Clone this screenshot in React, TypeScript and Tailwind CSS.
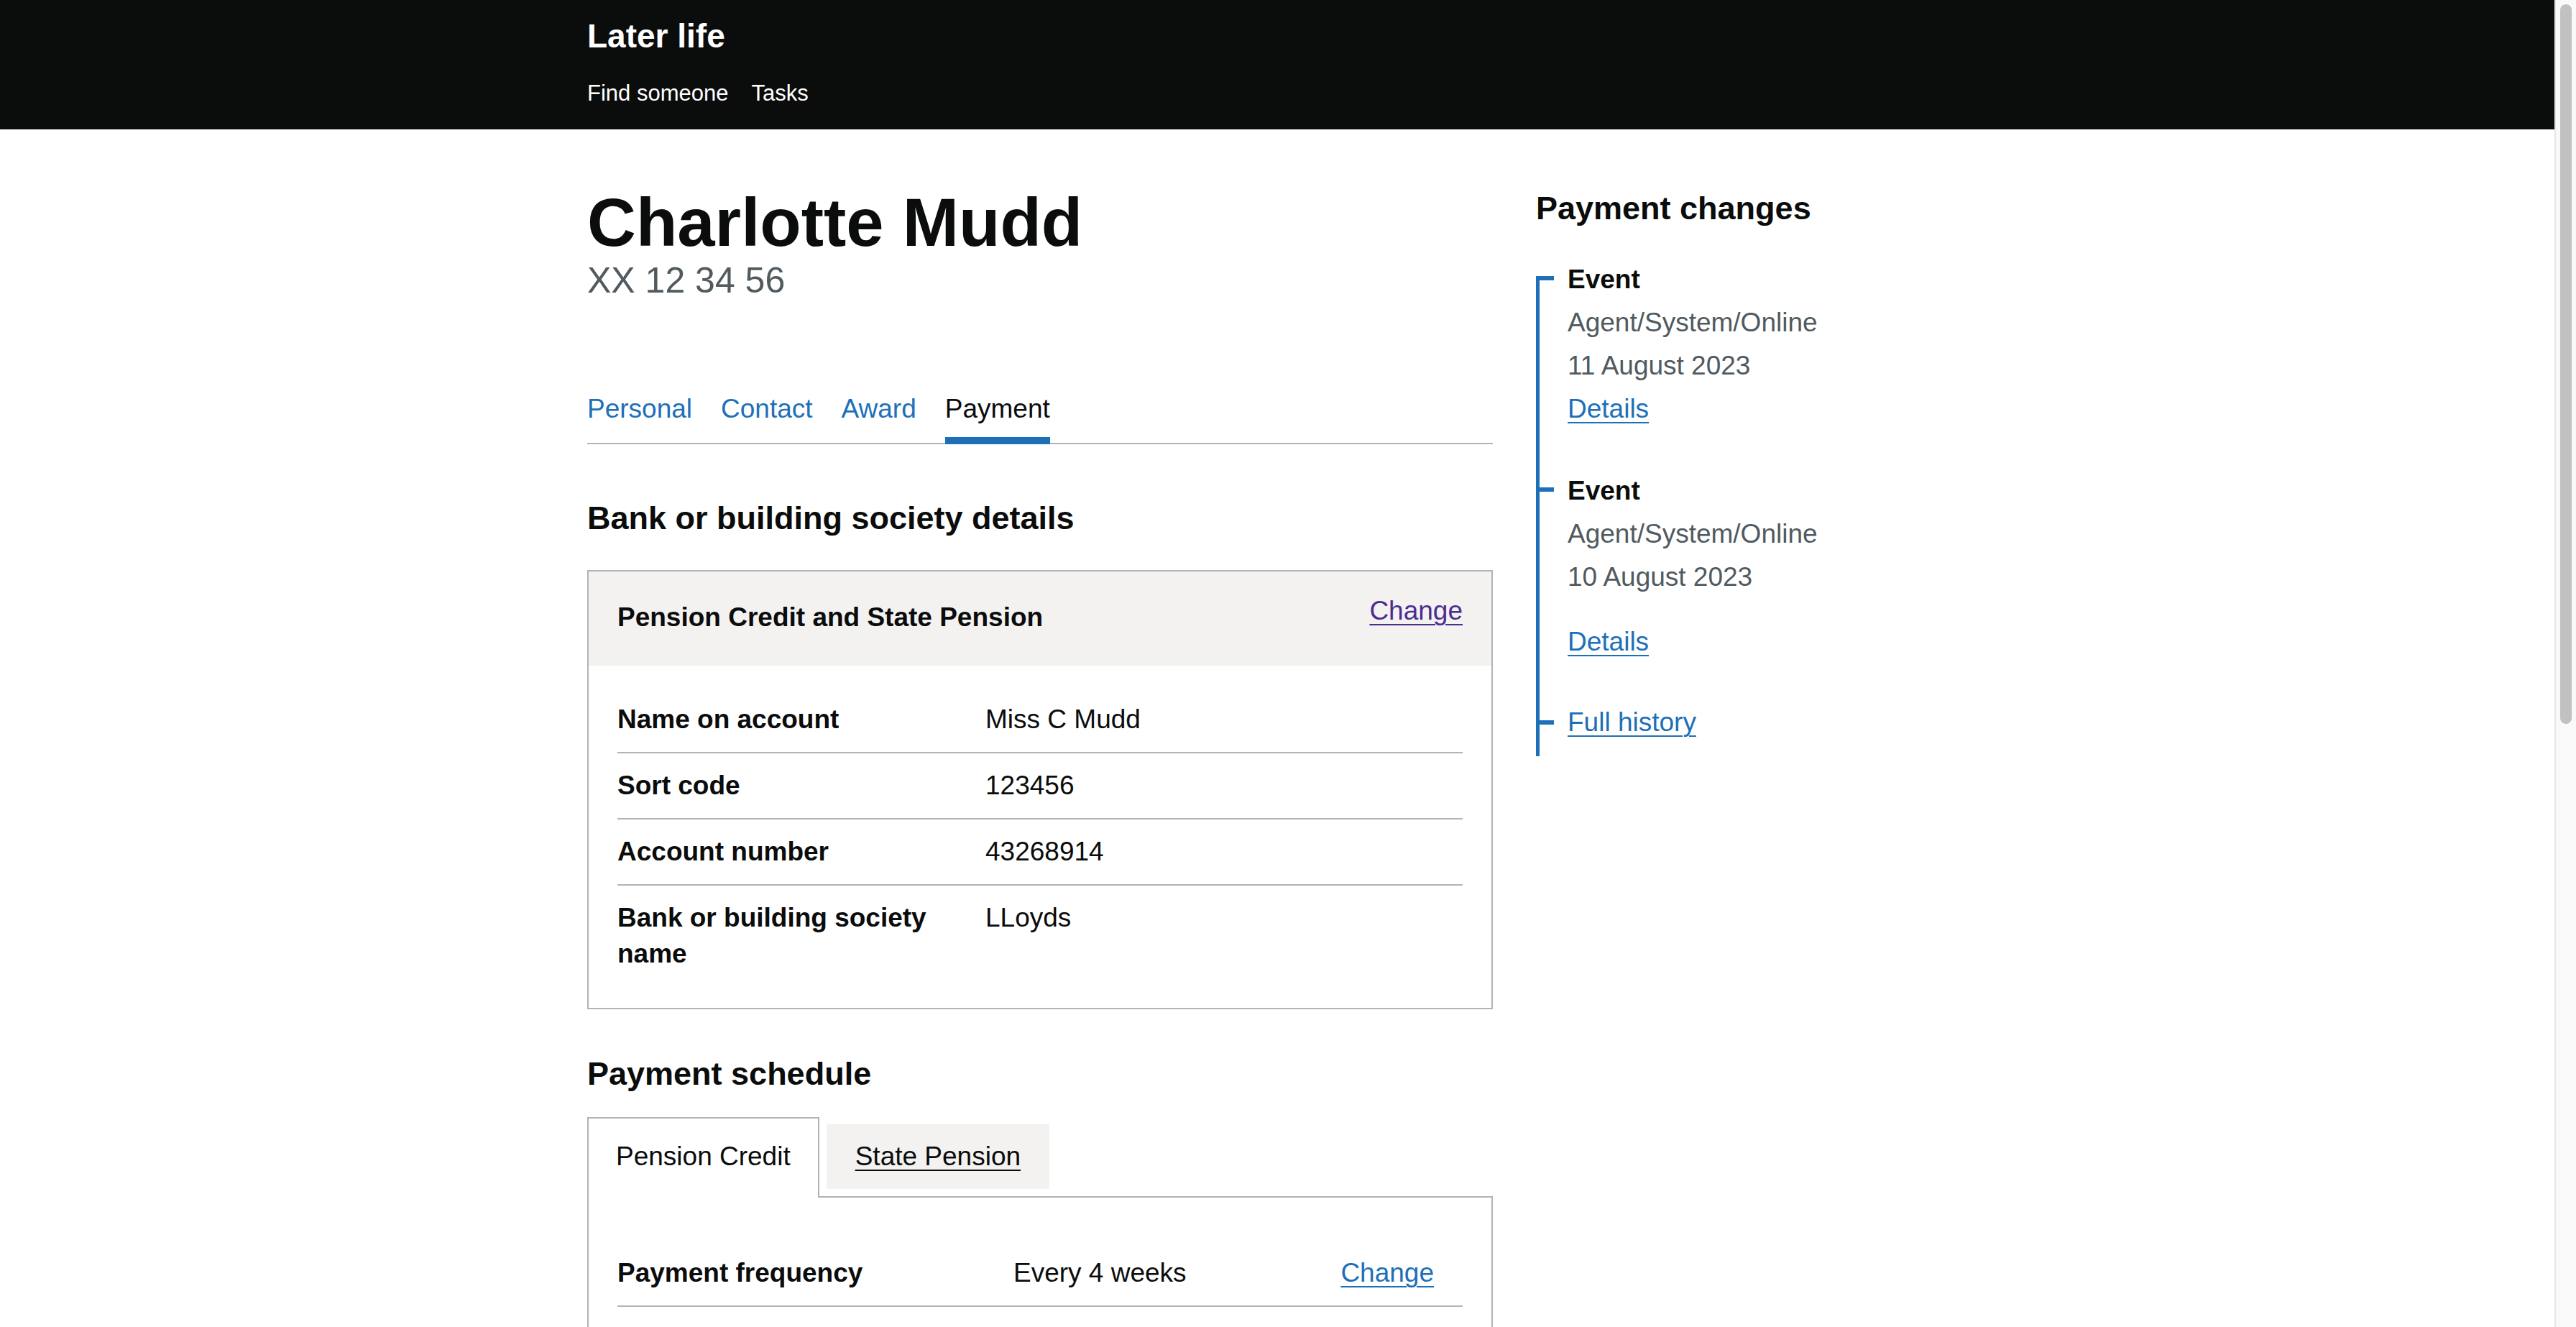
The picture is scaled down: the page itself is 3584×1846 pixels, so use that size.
const bankRows = [
  { key: 'Name on account', value: 'Miss C Mudd' },
  { key: 'Sort code', value: '123456' },
  { key: 'Account number', value: '43268914' },
  { key: 'Bank or building society name', value: 'LLoyds' },
]

const scheduleRows = [
  { key: 'Payment frequency', value: 'Every 4 weeks' },
  { key: 'Payment day', value: 'Monday' },
  { key: 'Next payment date', value: '4 September 2023' },
  { key: 'Amount', value: '£201.05' },
]

const recentPayments = [
  { key: '7 August 2023', value: '£201.05' },
  { key: '10 July 2023', value: '£201.05' },
  { key: '12 June 2023', value: '£201.05' },
  { key: '15 May 2023', value: '£198.40' },
]

const tabs = ['Personal', 'Contact', 'Award', 'Payment']

const linkCls = 'underline decoration-2 underline-offset-[6px]'

// Payment changes timeline item
const TimelineItem = ({ date, spaced }: { date: string; spaced?: boolean }) => (
  <div className="relative">
    <span className="absolute left-[-44px] top-[25px] h-[6px] w-[25px] bg-[#1d70b8]" />
    <div className="font-bold">Event</div>
    <div className="text-[#505a5f]">Agent/System/Online</div>
    <div className="text-[#505a5f]">{date}</div>
    <div className={spaced ? 'mt-[30px]' : ''}>
      <a href="#" className={`text-[#1d70b8] ${linkCls}`}>
        Details
      </a>
    </div>
  </div>
)

export default function App() {
  return (
    <div className="min-h-screen bg-white pr-[30px] font-['Liberation_Sans',Arial,sans-serif] text-[#0b0c0c]">
      {/* Header */}
      <header className="bg-[#0b0c0c] text-white">
        <div className="mx-auto max-w-[1920px] pt-[20px] pb-[25px]">
          <div className="text-[46px] font-bold leading-[60px]">Later life</div>
          <nav className="mt-[25px] flex gap-[32px] text-[31px] leading-[50px]">
            <a href="#">Find someone</a>
            <a href="#">Tasks</a>
          </nav>
        </div>
      </header>

      <main className="mx-auto flex max-w-[1920px] gap-[60px] pt-[80px] pb-[120px]">
        {/* Left column */}
        <div className="w-[1260px] shrink-0">
          <h1 className="text-[94px] font-bold leading-[100px]">Charlotte Mudd</h1>
          <div className="text-[50px] leading-[60px] text-[#505a5f]">XX 12 34 56</div>

          <ul className="mt-[124px] flex gap-[40px] border-b-2 border-[#b1b4b6] text-[37px] leading-[50px]">
            {tabs.map((t) => (
              <li
                key={t}
                className={
                  t === 'Payment'
                    ? '-mb-[2px] border-b-[10px] border-[#1d70b8] pb-[14px] text-[#0b0c0c]'
                    : '-mb-[2px] border-b-[10px] border-transparent pb-[14px] text-[#1d70b8]'
                }
              >
                <a href="#">{t}</a>
              </li>
            ))}
          </ul>

          <h2 className="mt-[73px] mb-[42px] text-[45px] font-bold leading-[60px]">
            Bank or building society details
          </h2>

          {/* Summary card */}
          <div className="border-2 border-[#b1b4b6] text-[37px] leading-[50px]">
            <div className="flex items-start justify-between bg-[#f3f2f1] px-[40px] pt-[30px] pb-[42px]">
              <div className="mt-[9px] font-bold">Pension Credit and State Pension</div>
              <a href="#" className={`text-[#4c2c92] ${linkCls}`}>
                Change
              </a>
            </div>
            <dl className="px-[40px] py-[30px]">
              {bankRows.map((r, i) => (
                <div
                  key={r.key}
                  className={`grid grid-cols-[512px_1fr] py-[20px] ${
                    i < bankRows.length - 1 ? 'border-b-2 border-[#b1b4b6]' : ''
                  }`}
                >
                  <dt className="pr-[40px] font-bold">{r.key}</dt>
                  <dd>{r.value}</dd>
                </div>
              ))}
            </dl>
          </div>

          <h2 className="mt-[60px] text-[45px] font-bold leading-[60px]">Payment schedule</h2>

          {/* Schedule tabs */}
          <div className="mt-[30px] text-[37px] leading-[50px]">
            <ul className="flex items-start gap-[10px]">
              <li className="relative z-10 -mb-[2px] border-2 border-b-0 border-[#b1b4b6] bg-white px-[38px] pt-[28px] pb-[32px]">
                Pension Credit
              </li>
              <li className="mt-[10px] bg-[#f3f2f1] px-[40px] py-[20px]">
                <a href="#" className={linkCls}>
                  State Pension
                </a>
              </li>
            </ul>
            <div className="border-2 border-[#b1b4b6] px-[40px] py-[60px]">
              <dl>
                {scheduleRows.map((r, i) => (
                  <div
                    key={r.key}
                    className={`grid grid-cols-[551px_1fr_auto] py-[20px] ${
                      i < scheduleRows.length - 1 ? 'border-b-2 border-[#b1b4b6]' : ''
                    }`}
                  >
                    <dt className="pr-[40px] font-bold">{r.key}</dt>
                    <dd>{r.value}</dd>
                    <dd className="pr-[40px]">
                      <a href="#" className={`text-[#1d70b8] ${linkCls}`}>
                        Change
                      </a>
                    </dd>
                  </div>
                ))}
              </dl>
            </div>
          </div>

          <h2 className="mt-[60px] mb-[40px] text-[45px] font-bold leading-[60px]">Recent payments</h2>
          <dl className="text-[37px] leading-[50px]">
            {recentPayments.map((r) => (
              <div key={r.key} className="grid grid-cols-[551px_1fr] border-b-2 border-[#b1b4b6] py-[20px]">
                <dt className="pr-[40px] font-bold">{r.key}</dt>
                <dd>{r.value}</dd>
              </div>
            ))}
          </dl>
        </div>

        {/* Right column */}
        <div className="w-[600px] shrink-0">
          <h2 className="text-[45px] font-bold leading-[60px]">Payment changes</h2>
          <div className="relative mt-[39px] pl-[44px] text-[37px] leading-[60px]">
            <span className="absolute left-0 top-[25px] bottom-[-17px] w-[5px] bg-[#1d70b8]" />
            <TimelineItem date="11 August 2023" />
            <div className="mt-[54px]">
              <TimelineItem date="10 August 2023" spaced />
            </div>
            <div className="relative mt-[52px]">
              <span className="absolute left-[-44px] top-[27px] h-[6px] w-[25px] bg-[#1d70b8]" />
              <a href="#" className={`text-[#1d70b8] ${linkCls}`}>
                Full history
              </a>
            </div>
          </div>
        </div>
      </main>

      <footer className="border-t-2 border-[#b1b4b6] bg-[#f3f2f1]">
        <div className="mx-auto flex max-w-[1920px] gap-[40px] py-[100px] text-[31px] leading-[50px]">
          <a href="#" className="underline">Help</a>
          <a href="#" className="underline">Privacy</a>
          <a href="#" className="underline">Cookies</a>
          <a href="#" className="underline">Accessibility statement</a>
        </div>
      </footer>

      {/* Browser scrollbar */}
      <div className="fixed top-0 right-0 z-20 h-screen w-[30px] border-l-2 border-[#e6e6e6] bg-[#f9f9f9]">
        <div className="absolute top-[6px] left-[6px] h-[1001px] w-[16px] rounded-full bg-[#c1c1c1]" />
      </div>
    </div>
  )
}
